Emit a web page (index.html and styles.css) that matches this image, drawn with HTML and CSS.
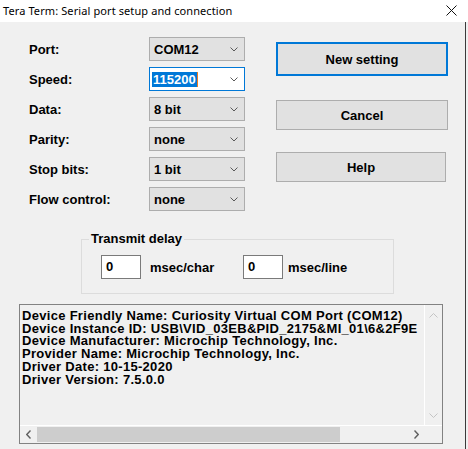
FILE: index.html
```html
<!DOCTYPE html>
<html lang="en">
<head>
<meta charset="utf-8">
<title>Tera Term: Serial port setup and connection</title>
<link rel="stylesheet" href="styles.css">
</head>
<body>
<div class="window">
  <div class="titlebar">
    <span class="title">Tera Term: Serial port setup and connection</span>
    <svg class="close" width="11" height="11" viewBox="0 0 11 11"><path d="M0.5 0.5 L10.5 10.5 M10.5 0.5 L0.5 10.5" stroke="#111" stroke-width="1" fill="none"/></svg>
  </div>
  <div class="content">
    <div class="top">
      <div class="form">
        <span class="label">Port:</span>
        <div class="combo"><span class="val">COM12</span><svg class="chev" width="8" height="5" viewBox="0 0 8 5"><path d="M0.5 0.5 L4 4 L7.5 0.5" stroke="#5a5a5a" fill="none"/></svg></div>
        <span class="label">Speed:</span>
        <div class="combo edit"><span class="val"><span class="sel">115200</span><span class="caret"></span></span><svg class="chev" width="8" height="5" viewBox="0 0 8 5"><path d="M0.5 0.5 L4 4 L7.5 0.5" stroke="#5a5a5a" fill="none"/></svg></div>
        <span class="label">Data:</span>
        <div class="combo"><span class="val">8 bit</span><svg class="chev" width="8" height="5" viewBox="0 0 8 5"><path d="M0.5 0.5 L4 4 L7.5 0.5" stroke="#5a5a5a" fill="none"/></svg></div>
        <span class="label">Parity:</span>
        <div class="combo"><span class="val">none</span><svg class="chev" width="8" height="5" viewBox="0 0 8 5"><path d="M0.5 0.5 L4 4 L7.5 0.5" stroke="#5a5a5a" fill="none"/></svg></div>
        <span class="label">Stop bits:</span>
        <div class="combo"><span class="val">1 bit</span><svg class="chev" width="8" height="5" viewBox="0 0 8 5"><path d="M0.5 0.5 L4 4 L7.5 0.5" stroke="#5a5a5a" fill="none"/></svg></div>
        <span class="label">Flow control:</span>
        <div class="combo"><span class="val">none</span><svg class="chev" width="8" height="5" viewBox="0 0 8 5"><path d="M0.5 0.5 L4 4 L7.5 0.5" stroke="#5a5a5a" fill="none"/></svg></div>
      </div>
      <div class="buttons">
        <button class="btn default">New setting</button>
        <button class="btn cancel">Cancel</button>
        <button class="btn help">Help</button>
      </div>
    </div>
    <div class="group">
      <span class="legend">Transmit delay</span>
      <div class="delay-row">
        <span class="num">0</span><span class="unit first">msec/char</span>
        <span class="num second">0</span><span class="unit">msec/line</span>
      </div>
    </div>
    <div class="info">
      <div class="text">
        <div class="line">Device Friendly Name: Curiosity Virtual COM Port (COM12)</div>
        <div class="line">Device Instance ID: USB\VID_03EB&amp;PID_2175&amp;MI_01\6&amp;2F9E</div>
        <div class="line">Device Manufacturer: Microchip Technology, Inc.</div>
        <div class="line">Provider Name: Microchip Technology, Inc.</div>
        <div class="line">Driver Date: 10-15-2020</div>
        <div class="line">Driver Version: 7.5.0.0</div>
      </div>
      <div class="vscroll">
        <svg width="9" height="5" viewBox="0 0 9 5"><path d="M0.5 4.5 L4.5 0.5 L8.5 4.5" stroke="#c4c4c4" fill="none"/></svg>
        <svg width="9" height="5" viewBox="0 0 9 5"><path d="M0.5 0.5 L4.5 4.5 L8.5 0.5" stroke="#c4c4c4" fill="none"/></svg>
      </div>
      <div class="hscroll">
        <span class="arrow"><svg width="5" height="9" viewBox="0 0 5 9"><path d="M4.5 0.5 L0.8 4.5 L4.5 8.5" stroke="#606060" stroke-width="1.4" fill="none"/></svg></span>
        <span class="thumb"></span>
        <span class="track"></span>
        <span class="arrow"><svg width="5" height="9" viewBox="0 0 5 9"><path d="M0.5 0.5 L4.2 4.5 L0.5 8.5" stroke="#606060" stroke-width="1.4" fill="none"/></svg></span>
      </div>
      <div class="corner"></div>
    </div>
  </div>
</div>
</body>
</html>
```

FILE: styles.css
```css
html, body {
  margin: 0;
  padding: 0;
  background: #f0f0f0;
}

.window {
  width: 468px;
  height: 449px;
  background: #f0f0f0;
  font-family: "Liberation Sans", Arial, sans-serif;
  font-weight: bold;
  font-size: 13px;
  color: #000;
  overflow: hidden;
}

.titlebar {
  height: 22px;
  background: #fff;
  display: flex;
  align-items: center;
  justify-content: space-between;
  padding: 0 11px 0 3px;
}

.title {
  font-family: "Noto Sans", "Open Sans", sans-serif;
  font-weight: normal;
  font-size: 11px;
  color: #000;
  letter-spacing: 0.1px;
  position: relative;
  top: -1px;
}

.close {
  display: block;
  margin-bottom: 2px;
}

.content {
  width: 465px;
  height: 427px;
  box-sizing: content-box;
  border-right: 1px solid #3a3a3a;
  padding-top: 15px;
  margin-top: 0;
}

.top {
  display: flex;
  align-items: flex-start;
}

.form {
  display: grid;
  grid-template-columns: 120px 96px;
  grid-auto-rows: 24px;
  row-gap: 6px;
  margin-left: 29px;
  align-items: center;
}

.label {
  line-height: 24px;
  padding-top: 1px;
}

.combo {
  height: 24px;
  box-sizing: border-box;
  border: 1px solid #adadad;
  background: #e1e1e1;
  display: flex;
  align-items: center;
  justify-content: space-between;
  padding: 1px 6px 0 4px;
}

.combo.edit {
  background: #fff;
  border-color: #0078d7;
  padding-left: 2px;
}

.val {
  display: flex;
  align-items: center;
  line-height: 15px;
}

.sel {
  background: #0078d7;
  color: #fff;
  padding: 0 1px 0 1px;
}

.caret {
  width: 1px;
  height: 15px;
  background: #f07a1c;
}

.chev {
  display: block;
}

.buttons {
  display: flex;
  flex-direction: column;
  margin-left: 31px;
  margin-top: 5px;
}

.btn {
  font: inherit;
  color: #000;
  box-sizing: border-box;
  width: 172px;
  height: 30px;
  border: 1px solid #adadad;
  background: #e1e1e1;
  padding: 0;
  border-radius: 0;
}

.btn.default {
  height: 34px;
  border: 2px solid #0078d7;
}

.btn.cancel {
  margin-top: 24px;
}

.btn.help {
  margin-top: 22px;
  width: 170px;
}

.group {
  position: relative;
  box-sizing: border-box;
  width: 313px;
  height: 55px;
  margin: 28px 0 0 81px;
  border: 1px solid #dcdcdc;
  padding: 15px 0 0 19px;
}

.legend {
  position: absolute;
  left: 7px;
  top: -9px;
  background: #f0f0f0;
  padding: 0 2px 0 2px;
  line-height: 16px;
}

.delay-row {
  display: flex;
  align-items: center;
}

.num {
  box-sizing: border-box;
  width: 40px;
  height: 24px;
  border: 1px solid #7a7a7a;
  background: #fff;
  padding: 2px 0 0 4px;
  line-height: 18px;
}

.unit {
  margin-left: 9px;
  padding-top: 1px;
}

.unit.first {
  width: 93px;
}

.num.second + .unit {
  margin-left: 5px;
}

.info {
  box-sizing: border-box;
  width: 424px;
  height: 140px;
  margin: 10px 0 0 19px;
  border: 1px solid #828282;
  display: grid;
  grid-template-columns: 1fr 17px;
  grid-template-rows: 1fr 17px;
}

.text {
  padding: 5px 0 0 2px;
  line-height: 12.7px;
  letter-spacing: 0.3px;
  white-space: nowrap;
  overflow: hidden;
  border-right: 1px solid #fff;
  border-bottom: 1px solid #fff;
}

.vscroll {
  display: flex;
  flex-direction: column;
  justify-content: space-between;
  align-items: center;
  padding: 8px 0 7px 0;
  border-bottom: 1px solid #fff;
}

.vscroll svg {
  display: block;
}

.hscroll {
  display: flex;
  align-items: stretch;
}

.hscroll .arrow {
  width: 17px;
  display: flex;
  align-items: center;
  justify-content: center;
}

.thumb {
  width: 303px;
  background: #cdcdcd;
  margin: 1px 0;
}

.track {
  flex: 1;
}

.corner {
  background: #f0f0f0;
}
```
